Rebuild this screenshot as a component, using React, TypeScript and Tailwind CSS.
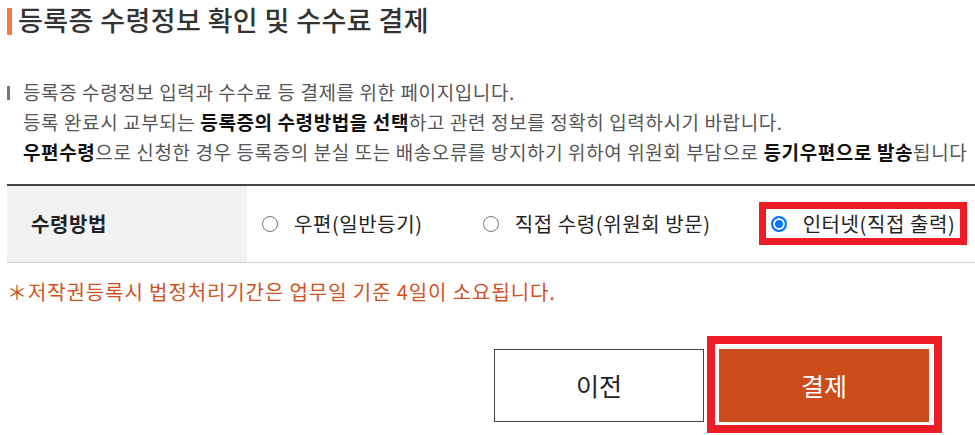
import React from 'react';

const options = [
  { id: 'post', label: '우편(일반등기)' },
  { id: 'visit', label: '직접 수령(위원회 방문)' },
  { id: 'online', label: '인터넷(직접 출력)', checked: true, marked: true },
];

const App = () => (
  <div className="w-[975px] h-[435px] overflow-hidden bg-white pl-[7px] font-['Noto_Sans_CJK_KR',sans-serif] text-[#333]">
    {/* title */}
    <div className="flex items-start pt-[1px]">
      <div className="w-[5px] h-[27px] mt-[7px] bg-[#f47b3e]"></div>
      <h2 className="ml-[6px] text-[27px] leading-[38px] tracking-[0.4px] font-medium text-[#333]">
        등록증 수령정보 확인 및 수수료 결제
      </h2>
    </div>

    {/* description */}
    <div className="flex items-start mt-[38px]">
      <div className="w-[3px] h-[14px] mt-[9px] bg-[#6b7b6b]"></div>
      <div className="ml-[13px] text-[19px] leading-[30px] tracking-[0.6px] text-[#555] whitespace-nowrap">
        <p>등록증 수령정보 입력과 수수료 등 결제를 위한 페이지입니다.</p>
        <p>
          등록 완료시 교부되는 <b className="font-bold text-[#111]">등록증의 수령방법을 선택</b>하고 관련 정보를 정확히 입력하시기 바랍니다.
        </p>
        <p>
          <b className="font-bold text-[#111]">우편수령</b>으로 신청한 경우 등록증의 분실 또는 배송오류를 방지하기 위하여 위원회 부담으로{' '}
          <b className="font-bold text-[#111]">등기우편으로 발송</b>됩니다
        </p>
      </div>
    </div>

    {/* receive method table */}
    <div className="mt-[17px] border-t-2 border-[#444]">
      <div className="flex h-[77px] border-b border-[#ccc]">
        <div className="w-[240px] shrink-0 flex items-center pl-[24px] bg-[#f2f2f2] text-[20px] tracking-[0.6px] font-bold text-[#222]">
          수령방법
        </div>
        <div className="flex items-center gap-[60px] pl-[15px] text-[20px] tracking-[0.6px] text-[#222]">
          {options.map((o) => (
            <label key={o.id} className="relative flex items-center shrink-0 h-[28px]">
              <input
                type="radio"
                name="method"
                defaultChecked={o.checked}
                className="appearance-none shrink-0 w-[16px] h-[16px] m-0 rounded-full border border-[#767676] bg-white checked:border-2 checked:border-[#0075ff] checked:bg-[#0075ff] checked:shadow-[inset_0_0_0_2px_white]"
              />
              <span className="ml-[16px] whitespace-nowrap">{o.label}</span>
              {o.marked && (
                <span className="absolute -left-[12px] -right-[12px] -top-[8px] -bottom-[7px] border-[7px] border-[#ee1c25]"></span>
              )}
            </label>
          ))}
        </div>
      </div>
    </div>

    {/* notice */}
    <p className="mt-[14px] text-[20px] leading-[30px] tracking-[0.9px] text-[#d0521e] whitespace-nowrap">
      ＊저작권등록시 법정처리기간은 업무일 기준 4일이 소요됩니다.
    </p>

    {/* buttons */}
    <div className="flex justify-end gap-[15px] pr-[46px] mt-[42px]">
      <button className="w-[210px] h-[73px] border border-[#444] bg-white text-[25px] text-[#222]">
        이전
      </button>
      <div className="relative">
        <button className="w-[210px] h-[73px] bg-[#cb4b1c] text-[25px] text-white">결제</button>
        <span className="absolute -left-[12px] -right-[13px] -top-[13px] -bottom-[11px] border-8 border-[#ee1c25]"></span>
      </div>
    </div>
  </div>
);

export default App;
